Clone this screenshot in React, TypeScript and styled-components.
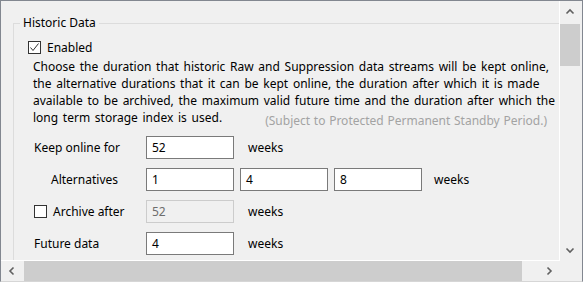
import React from "react";
import styled, { createGlobalStyle } from "styled-components";

const GlobalStyle = createGlobalStyle`
  html, body { margin: 0; padding: 0; background: #ffffff; }
  body { font-family: "Noto Sans", "Open Sans", sans-serif; font-size: 12px; color: #000; }
`;

const Window = styled.div`
  box-sizing: border-box;
  width: 583px;
  height: 282px;
  border: 1px solid #828790;
  border-bottom-color: #d6d6d6;
  background: #f0f0f0;
  display: grid;
  grid-template-columns: 559px 22px;
  grid-template-rows: 260px 20px;
`;

const Viewport = styled.div`
  box-sizing: border-box;
  overflow: hidden;
  border-right: 1px solid #ffffff;
  border-bottom: 1px solid #ffffff;
  padding: 14px 0 0 12px;
`;

const GroupBox = styled.fieldset`
  margin: 0;
  padding: 0 0 40px 14px;
  width: 600px;
  border: 1px solid #dcdcdc;
  border-radius: 0;
  min-width: 0;
`;

const GroupTitle = styled.legend`
  margin-left: -8px;
  padding: 0 3px;
  line-height: 16px;
  font-size: 12px;
  white-space: nowrap;
`;

const Content = styled.div`
  width: 519px;
  display: flex;
  flex-direction: column;
  padding-top: 8px;
`;

const CheckRow = styled.label`
  display: flex;
  align-items: center;
  height: 16px;
  white-space: nowrap;
`;

const Box = styled.span`
  box-sizing: border-box;
  width: 13px;
  height: 13px;
  border: 1px solid #333333;
  background: #ffffff;
  margin-right: 6px;
  display: inline-flex;
  align-items: center;
  justify-content: center;
  flex: none;
`;

const Paragraph = styled.p`
  margin: 3px 0 0 5px;
  line-height: 17px;
  white-space: nowrap;
  word-spacing: 1.6px;
`;

const Note = styled.div`
  margin-top: -14px;
  line-height: 17px;
  text-align: right;
  color: #a3a3a3;
  white-space: nowrap;
  word-spacing: 0.6px;
`;

const Form = styled.div`
  margin-top: 7px;
  display: flex;
  flex-direction: column;
  gap: 9px;
`;

const FieldRow = styled.div`
  display: flex;
  align-items: center;
  height: 23px;
  margin-left: 6px;
`;

const FieldLabel = styled.div<{ $indent?: number }>`
  width: 112px;
  box-sizing: border-box;
  padding-left: ${(p) => p.$indent ?? 0}px;
  white-space: nowrap;
  display: flex;
  align-items: center;
`;

const Inputs = styled.div`
  display: flex;
  gap: 6px;
`;

const TextBox = styled.div<{ $disabled?: boolean }>`
  box-sizing: border-box;
  width: 88px;
  height: 23px;
  border: 1px solid ${(p) => (p.$disabled ? "#cccccc" : "#7a7a7a")};
  background: ${(p) => (p.$disabled ? "#f0f0f0" : "#ffffff")};
  color: ${(p) => (p.$disabled ? "#6d6d6d" : "#000000")};
  padding-left: 5px;
  display: flex;
  align-items: center;
`;

const Unit = styled.span<{ $gap?: number }>`
  margin-left: ${(p) => p.$gap ?? 14}px;
`;

const VBar = styled.div`
  display: grid;
  grid-template-rows: 22px 1fr 22px;
  padding-right: 2px;
`;

const HBar = styled.div`
  display: grid;
  grid-template-columns: 22px 1fr 22px;
`;

const ArrowBtn = styled.div`
  display: flex;
  align-items: center;
  justify-content: center;
`;

const VTrack = styled.div`
  display: flex;
  flex-direction: column;
`;

const VThumb = styled.div`
  height: 42px;
  background: #cdcdcd;
  margin-top: 1px;
`;

const HTrack = styled.div`
  display: flex;
  padding-right: 16px;
`;

const HThumb = styled.div`
  flex: 1;
  background: #cdcdcd;
  margin-left: 1px;
`;

const Corner = styled.div``;

const Chevron = ({ dir }: { dir: "up" | "down" | "left" | "right" }) => {
  const rot = { up: 0, right: 90, down: 180, left: 270 }[dir];
  return (
    <svg width="10" height="10" viewBox="0 0 10 10">
      <path
        d="M1.5 6.5 L5 3 L8.5 6.5"
        fill="none"
        stroke="#606060"
        strokeWidth="1.6"
        transform={`rotate(${rot} 5 5)`}
      />
    </svg>
  );
};

const Check = () => (
  <svg width="11" height="11" viewBox="0 0 11 11">
    <path d="M1.5 5.5 L4 8.5 L9.5 1.5" fill="none" stroke="#333333" strokeWidth="1" />
  </svg>
);

export default function App() {
  return (
    <>
      <GlobalStyle />
      <Window>
        <Viewport>
          <GroupBox>
            <GroupTitle>Historic Data</GroupTitle>
            <Content>
              <CheckRow>
                <Box>
                  <Check />
                </Box>
                Enabled
              </CheckRow>
              <Paragraph>
                Choose the duration that historic Raw and Suppression data streams will be kept online,
                <br />
                the alternative durations that it can be kept online, the duration after which it is made
                <br />
                available to be archived, the maximum valid future time and the duration after which the
                <br />
                long term storage index is used.
              </Paragraph>
              <Note>(Subject to Protected Permanent Standby Period.)</Note>
              <Form>
                <FieldRow>
                  <FieldLabel>Keep online for</FieldLabel>
                  <TextBox>52</TextBox>
                  <Unit>weeks</Unit>
                </FieldRow>
                <FieldRow>
                  <FieldLabel $indent={17}>Alternatives</FieldLabel>
                  <Inputs>
                    <TextBox>1</TextBox>
                    <TextBox>4</TextBox>
                    <TextBox>8</TextBox>
                  </Inputs>
                  <Unit $gap={12}>weeks</Unit>
                </FieldRow>
                <FieldRow>
                  <FieldLabel>
                    <Box />
                    Archive after
                  </FieldLabel>
                  <TextBox $disabled>52</TextBox>
                  <Unit>weeks</Unit>
                </FieldRow>
                <FieldRow>
                  <FieldLabel>Future data</FieldLabel>
                  <TextBox>4</TextBox>
                  <Unit>weeks</Unit>
                </FieldRow>
              </Form>
            </Content>
          </GroupBox>
        </Viewport>
        <VBar>
          <ArrowBtn>
            <Chevron dir="up" />
          </ArrowBtn>
          <VTrack>
            <VThumb />
          </VTrack>
          <ArrowBtn>
            <Chevron dir="down" />
          </ArrowBtn>
        </VBar>
        <HBar>
          <ArrowBtn>
            <Chevron dir="left" />
          </ArrowBtn>
          <HTrack>
            <HThumb />
          </HTrack>
          <ArrowBtn>
            <Chevron dir="right" />
          </ArrowBtn>
        </HBar>
        <Corner />
      </Window>
    </>
  );
}
